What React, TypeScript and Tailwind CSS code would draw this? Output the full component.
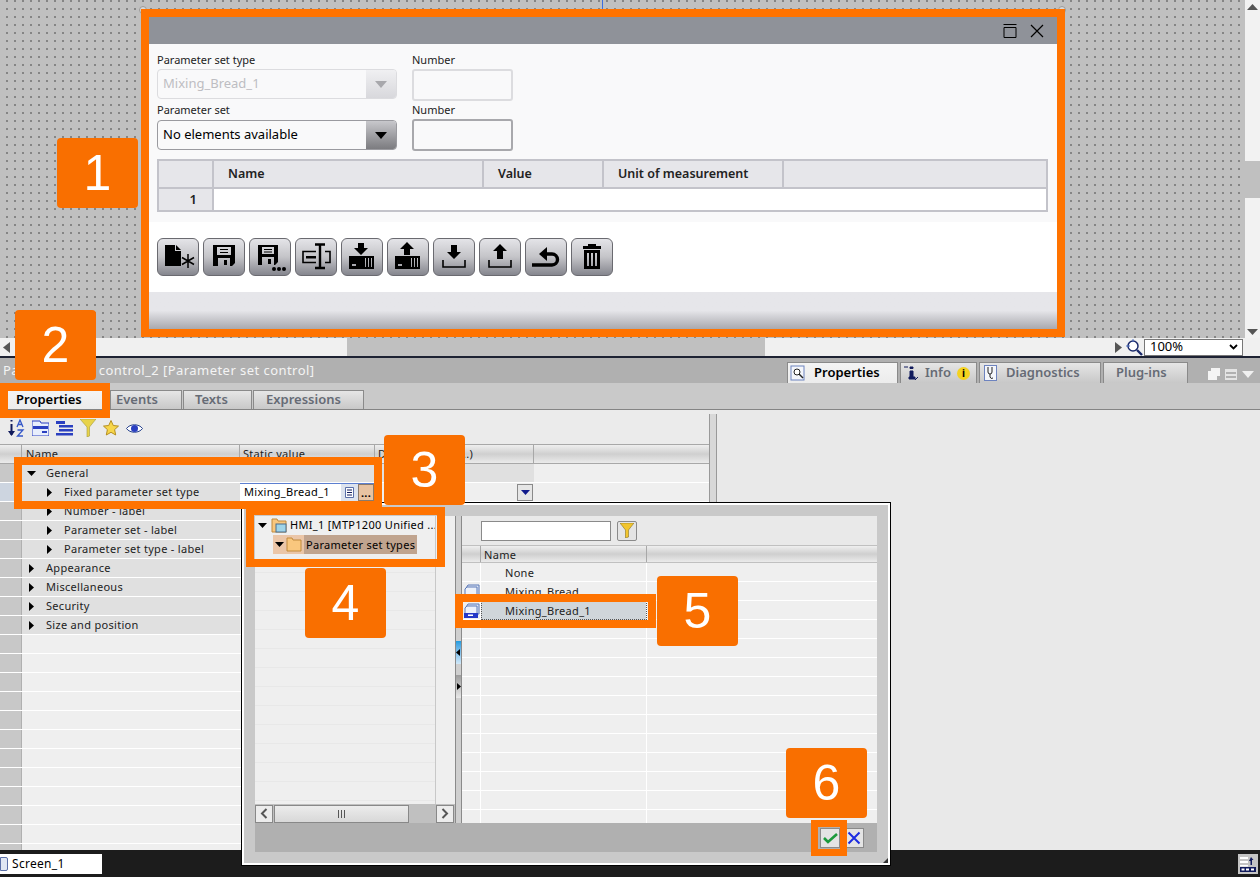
import type { ReactNode } from 'react'

const propRows = [
  { label: 'General', level: 0, open: true },
  { label: 'Fixed parameter set type', level: 1, selected: true },
  { label: 'Number - label', level: 1 },
  { label: 'Parameter set - label', level: 1 },
  { label: 'Parameter set type - label', level: 1 },
  { label: 'Appearance', level: 0 },
  { label: 'Miscellaneous', level: 0 },
  { label: 'Security', level: 0 },
  { label: 'Size and position', level: 0 },
]

// drawn in button pixels, 42x38
const toolIcons: ReactNode[] = [
  <>
    <path d="M8 7h10v6h6v15H8z" fill="#000" />
    <path d="M19 7l5 5h-5z" fill="#000" />
    <path d="M31 16v14M25 19.500l12 7M37 19.500l-12 7" stroke="#000" strokeWidth="1.5" />
  </>,
  <path fillRule="evenodd" d="M10 7h22v18l-3 3H10zM14 9v8h14V9zM17 11h8v1h-8zM17 14h8v1h-8zM15 20v8h12v-8zM21 22h3v5h-3z" fill="#000" />,
  <>
    <path fillRule="evenodd" d="M9 7h20v17l-3 3H9zM13 9v7h12V9zM15 11h8v1h-8zM15 13.500h8v1h-8zM13 19v8h12v-8zM19 21h3v5h-3z" fill="#000" />
    <circle cx="25" cy="31" r="2" fill="#000" />
    <circle cx="30" cy="31" r="2" fill="#000" />
    <circle cx="35" cy="31" r="2" fill="#000" />
  </>,
  <>
    <path d="M21 13.500H8v11h13M30 13.500h5v11h-5" fill="none" stroke="#000" strokeWidth="1.6" />
    <path d="M11 18h10v2.500H11z" fill="#000" />
    <path d="M20 6.500h10M20 30h10M25 6.500V30" fill="none" stroke="#000" strokeWidth="2.4" />
  </>,
  <>
    <path d="M17 5h6v5h4l-7 7-7-7h4z" fill="#000" />
    <path fillRule="evenodd" d="M8 18h25v13H8zM11 26v2h4v-2zM24 20v9h1v-9zM27 20v9h1v-9zM30 20v9h1v-9z" fill="#000" />
  </>,
  <>
    <path d="M20 4l7 7h-4v6h-6v-6h-4z" fill="#000" />
    <path fillRule="evenodd" d="M8 18h25v13H8zM11 26v2h4v-2zM24 20v9h1v-9zM27 20v9h1v-9zM30 20v9h1v-9z" fill="#000" />
  </>,
  <>
    <path d="M18 7h6v7h4l-7 7-7-7h4z" fill="#000" />
    <path d="M10 22v7h22v-7" fill="none" stroke="#000" strokeWidth="1.6" />
  </>,
  <>
    <path d="M21 6l7 7h-4v8h-6v-8h-4z" fill="#000" />
    <path d="M10 22v7h22v-7" fill="none" stroke="#000" strokeWidth="1.6" />
  </>,
  <>
    <path d="M7 27h20a5.500 5.500 0 0 0 0-11H19" fill="none" stroke="#000" strokeWidth="3.400" />
    <path d="M14 16l8-7v14z" fill="#000" />
  </>,
  <>
    <path d="M17 8V6h8v2h5v3H12V8z" fill="#000" />
    <path fillRule="evenodd" d="M13 12h16v19H13zM16 15v13h2V15zM20 15v13h2V15zM24 15v13h2V15z" fill="#000" />
  </>,
]

function Callout({ n, className }: { n: number; className: string }) {
  return (
    <div
      className={`absolute z-30 flex h-[70px] w-[81px] items-center justify-center rounded-[4px] bg-[#f96f00] font-['Liberation_Sans',sans-serif] text-[50px] leading-none text-white ${className}`}
    >
      {n}
    </div>
  )
}

function Frame({ className }: { className: string }) {
  return <div className={`pointer-events-none absolute z-20 border-[#ff7300] ${className}`} />
}

function Caret({ open, className = '' }: { open?: boolean; className?: string }) {
  return (
    <svg width="9" height="9" viewBox="0 0 9 9" className={`shrink-0 ${className}`}>
      <path d={open ? 'M0 2h9L4.5 7z' : 'M2 0l5 4.5L2 9z'} fill="#000" />
    </svg>
  )
}

function Handle({ className }: { className: string }) {
  return <div className={`absolute h-2 w-2 rounded-full border border-[#999] bg-[#d8d8d8] ${className}`} />
}

function Combo({ text, disabled }: { text: string; disabled?: boolean }) {
  return (
    <div
      className={`flex h-[30px] w-[240px] overflow-hidden rounded-[4px] border bg-[#f9f9fa] ${
        disabled ? 'border-[#dcdcdf]' : 'border-[#9a9a9f]'
      }`}
    >
      <div className={`flex-1 pl-[5px] text-[13px] leading-[27px] ${disabled ? 'text-[#bdbdc2]' : 'text-black'}`}>{text}</div>
      <div
        className={`flex w-[30px] items-center justify-center bg-gradient-to-b ${
          disabled ? 'from-[#f0f0f2] to-[#d8d8dc]' : 'from-[#c8c8cc] to-[#7c7c80]'
        }`}
      >
        <svg width="12" height="7" viewBox="0 0 12 7">
          <path d="M0 0h12L6 7z" fill={disabled ? '#a8a8ac' : '#000'} />
        </svg>
      </div>
    </div>
  )
}

function FolderIcon({ screen }: { screen?: boolean }) {
  return (
    <svg width="16" height="15" viewBox="0 0 16 15" className="shrink-0">
      <path d="M1 3V1h5l1 2h8v11H1z" fill="#f9c77e" stroke="#c08a3c" />
      {screen && <rect x="5" y="6" width="10" height="8" fill="#9fd4e8" stroke="#4a6d8c" />}
    </svg>
  )
}

function DbIcon() {
  return (
    <svg width="17" height="16" viewBox="0 0 17 16">
      <path d="M3 4l2-3h11v10H3z" fill="#dfe6f3" stroke="#5a78b8" />
      <path d="M2 5l2-2h10v9H2z" fill="#eef2fa" stroke="#5a78b8" />
      <path d="M1 10h14v5H1z" fill="#2438c8" />
      <path d="M5 11.5h5v1.5H5z" fill="#fff" />
    </svg>
  )
}

function ScrollBtn({ left }: { left?: boolean }) {
  return (
    <div className="flex h-[18px] w-[18px] shrink-0 items-center justify-center border border-[#888] bg-[#ececec]">
      <svg width="8" height="11" viewBox="0 0 8 11">
        <path d={left ? 'M6.5 1L2 5.5 6.5 10' : 'M1.5 1L6 5.5 1.5 10'} fill="none" stroke="#555" strokeWidth="2" />
      </svg>
    </div>
  )
}

function HeaderCell({ className = '', children }: { className?: string; children?: ReactNode }) {
  return (
    <div className={`h-full overflow-hidden whitespace-nowrap border-r border-[#a8a8a8] bg-gradient-to-b from-[#efefef] via-[#cfcfcf] to-[#ebebeb] pl-[3px] text-[11px] leading-[17px] text-[#222] ${className}`}>
      {children}
    </div>
  )
}

function Tab({ children, active, className }: { children: ReactNode; active?: boolean; className: string }) {
  return (
    <div
      className={`flex items-center border border-b-0 border-[#8a8a8a] bg-gradient-to-b text-[13px] font-semibold ${
        active ? 'from-[#f4f4f4] to-[#ececec] text-black' : 'from-[#e6e6e6] to-[#c8c8c8] text-[#666b75]'
      } ${className}`}
    >
      {children}
    </div>
  )
}

export default function App() {
  return (
    <div className="relative flex h-[877px] w-[1260px] flex-col overflow-hidden bg-[#ebebeb] font-['Noto_Sans',sans-serif] text-[11px] tracking-[0.3px] text-[#222]">
      {/* editor canvas */}
      <div className="flex h-[338px] shrink-0">
        <div className="relative flex-1 bg-[#c0c0c0] bg-[radial-gradient(circle_at_7px_1px,#858585_1.2px,transparent_1.5px)] bg-[length:8px_8px]">
          <div className="absolute left-[602px] top-0 h-[9px] w-px bg-[#3b6fe0]" />
          <Handle className="left-[139px] top-[6px]" />
          <Handle className="left-[1058px] top-[6px]" />
          <Handle className="left-[141px] top-[168px]" />
          <Handle className="left-[1056px] top-[168px]" />
          <Handle className="left-[598px] top-[325px]" />

          <div className="absolute left-[141px] top-[9px] flex h-[328px] w-[924px] flex-col border-[8px] border-[#ff7300] bg-white">
            <div className="flex h-[27px] shrink-0 items-center justify-end gap-[13px] bg-[#8f9299] pr-[13px]">
              <svg width="14" height="14" viewBox="0 0 14 14">
                <path d="M.5.500h13M1 3.500h12v10H1z" fill="none" stroke="#000" />
              </svg>
              <svg width="14" height="14" viewBox="0 0 14 14">
                <path d="M1 1l12 12M13 1L1 13" fill="none" stroke="#000" strokeWidth="1.2" />
              </svg>
            </div>
            <div className="h-[178px] shrink-0 bg-[#f9f9fa] px-[8px] pt-[8px] tracking-normal">
              <div className="flex gap-[15px]">
                <div className="w-[240px]">
                  <div className="h-[17px] text-[11px] leading-[15px] text-[#222]">Parameter set type</div>
                  <Combo text="Mixing_Bread_1" disabled />
                </div>
                <div>
                  <div className="h-[17px] text-[11px] leading-[15px] text-[#222]">Number</div>
                  <div className="h-[32px] w-[101px] rounded-[3px] border-2 border-[#dcdcdf]" />
                </div>
              </div>
              <div className="flex gap-[15px]">
                <div className="w-[240px]">
                  <div className="h-[19px] text-[11px] leading-[18px] text-[#222]">Parameter set</div>
                  <Combo text="No elements available" />
                </div>
                <div>
                  <div className="h-[18px] text-[11px] leading-[18px] text-[#222]">Number</div>
                  <div className="h-[32px] w-[101px] rounded-[3px] border-2 border-[#a8a8ac]" />
                </div>
              </div>
              <div className="mt-[8px] w-[891px] border-2 border-[#c3c3ca] bg-[#e6e6ea]">
                <div className="flex h-[26px] text-[12.5px] font-semibold leading-[25px]">
                  <div className="w-[55px] border-r-2 border-[#c3c3ca]" />
                  <div className="w-[270px] border-r-2 border-[#c3c3ca] pl-[14px]">Name</div>
                  <div className="w-[120px] border-r-2 border-[#c3c3ca] pl-[14px]">Value</div>
                  <div className="w-[180px] border-r-2 border-[#c3c3ca] pl-[14px]">Unit of measurement</div>
                </div>
                <div className="flex h-[23px] border-t-2 border-[#c3c3ca] bg-white">
                  <div className="w-[55px] border-r-2 border-[#c3c3ca] bg-[#e6e6ea] pr-[15px] text-right text-[13px] font-semibold leading-[21px]">1</div>
                </div>
              </div>
            </div>
            <div className="flex h-[70px] shrink-0 items-start gap-[4px] px-[8px] pt-[16px]">
              {toolIcons.map((icon, i) => (
                <div key={i} className="h-[38px] w-[42px] shrink-0 rounded-[6px] border border-[#6a6a70] bg-gradient-to-b from-[#e4e4e8] via-[#c4c4c8] to-[#85868e]">
                  <svg width="40" height="36" viewBox="1 1 40 36">
                    {icon}
                  </svg>
                </div>
              ))}
            </div>
            <div className="flex-1 bg-gradient-to-b from-[#e6e6ea] via-[#e6e6ea] to-[#a9a9ae]" />
          </div>
        </div>
        <div className="relative w-[15px] bg-[#f2f2f2]">
          <svg width="11" height="6" viewBox="0 0 11 6" className="absolute left-[2px] top-[4px]">
            <path d="M0 6l5.5-6L11 6z" fill="#555" />
          </svg>
          <div className="absolute left-0 top-[161px] h-[37px] w-full bg-[#c0c0c0]" />
          <svg width="11" height="6" viewBox="0 0 11 6" className="absolute bottom-[3px] left-[2px]">
            <path d="M0 0l5.5 6L11 0z" fill="#555" />
          </svg>
        </div>
      </div>

      {/* canvas horizontal scroll + zoom */}
      <div className="flex h-[18px] shrink-0 items-center bg-[#f0f0f0]">
        <svg width="7" height="11" viewBox="0 0 7 11" className="ml-[3px]">
          <path d="M7 0v11L0 5.5z" fill="#555" />
        </svg>
        <div className="ml-[337px] h-full w-[418px] bg-[#c0c0c0]" />
        <svg width="7" height="11" viewBox="0 0 7 11" className="ml-[350px]">
          <path d="M0 0v11l7-5.5z" fill="#555" />
        </svg>
        <svg width="18" height="17" viewBox="0 0 18 17" className="ml-[3px]">
          <circle cx="8" cy="7" r="5" fill="#fff" stroke="#1b2a6b" strokeWidth="1.5" />
          <path d="M12 11l5 5" stroke="#1b2a6b" strokeWidth="2.4" />
          <path d="M1 7h4M8 0v3" stroke="#4a6ec0" />
        </svg>
        <div className="ml-[1px] flex h-[17px] w-[99px] items-center justify-between border border-[#777] bg-white pl-[5px] pr-[4px] text-[13px] tracking-normal text-black">
          100%
          <svg width="9" height="6" viewBox="0 0 9 6">
            <path d="M1 1l3.5 3.5L8 1" fill="none" stroke="#000" strokeWidth="1.8" />
          </svg>
        </div>
      </div>
      <div className="h-[2px] shrink-0 bg-[#1d2233]" />

      {/* inspector title bar */}
      <div className="flex h-[25px] shrink-0 items-end justify-between bg-[#b0b0b0] pl-[3px]">
        <div className="self-center whitespace-nowrap text-[13px] tracking-[0.45px] text-[#f4f4f4]">Parameter set control_2 [Parameter set control]</div>
        <div className="flex items-end tracking-normal">
          <div className="flex gap-[2px]">
            <Tab active className="h-[21px] w-[111px] gap-[8px] pl-[2px]">
              <svg width="16" height="16" viewBox="0 0 16 16">
                <rect x="1" y="1" width="13" height="14" fill="#f4f6fb" stroke="#6d83bf" />
                <circle cx="7" cy="7" r="3" fill="#fff" stroke="#222" />
                <path d="M9 9l4 4" stroke="#222" strokeWidth="1.5" />
              </svg>
              Properties
            </Tab>
            <Tab className="h-[21px] w-[77px] gap-[6px] pl-[2px]">
              <svg width="16" height="16" viewBox="0 0 16 16">
                <path d="M7 2h3v1.500H7zM7 6h3v6h2v2H6v-2h1zM1 2l4 0M12 15l3-3" stroke="#111b5c" strokeWidth="1" fill="#111b5c" />
              </svg>
              Info
              <span className="flex h-[13px] w-[13px] items-center justify-center rounded-full bg-[#f4d21f] text-[10px] font-bold leading-none text-black">i</span>
            </Tab>
            <Tab className="h-[21px] w-[122px] gap-[9px] pl-[4px]">
              <svg width="13" height="16" viewBox="0 0 13 16">
                <rect x=".5" y=".5" width="12" height="15" fill="#f4f6fb" stroke="#6d83bf" />
                <path d="M4 2v5a2 2 0 0 0 4 0V2M6 9v3a2 2 0 0 0 3 1" fill="none" stroke="#222" />
              </svg>
              Diagnostics
            </Tab>
            <Tab className="h-[21px] w-[85px] pl-[12px]">Plug-ins</Tab>
          </div>
          <div className="mb-[3px] ml-[20px] flex items-center gap-[5px] pr-[6px]">
            <svg width="12" height="12" viewBox="0 0 12 12">
              <path d="M3 0h9v8H9V3H3zM0 3h9v9H0z" fill="#f4f4f4" />
            </svg>
            <svg width="12" height="11" viewBox="0 0 12 11">
              <path d="M0 0h12v11H0zM1 3v2h10V3zM1 7v2h10V7z" fill="#e4e4e4" fillRule="evenodd" />
            </svg>
            <svg width="12" height="7" viewBox="0 0 12 7">
              <path d="M0 0h12L6 7z" fill="#f0f0f0" />
            </svg>
          </div>
        </div>
      </div>

      {/* inspector tabs */}
      <div className="flex h-[27px] shrink-0 items-end gap-[1px] border-b border-[#848484] bg-[#c9c9c9] pl-[8px] tracking-normal">
        <Tab active className="h-[19px] w-[94px] justify-start border-0 pl-[8px]">Properties</Tab>
        <Tab className="ml-[7px] h-[19px] w-[72px] pl-[5px]">Events</Tab>
        <Tab className="h-[19px] w-[69px] pl-[11px]">Texts</Tab>
        <Tab className="h-[19px] w-[111px] pl-[12px]">Expressions</Tab>
      </div>

      {/* property grid */}
      <div className="flex min-h-0 flex-1">
        <div className="flex w-[709px] shrink-0 flex-col">
          <div className="flex h-[34px] shrink-0 items-center gap-[7px] pl-[8px] pt-[2px]">
            <svg width="17" height="18" viewBox="0 0 17 18">
              <path d="M3.500 1v1.500M3.500 5v11" stroke="#111b5c" strokeWidth="2" />
              <path d="M0 12l3.500 5L7 12z" fill="#111b5c" />
              <path d="M9 8l3-7 3 7M10 5.500h4M9.500 11H15l-5.500 6H15" fill="none" stroke="#3457c8" strokeWidth="1.3" />
            </svg>
            <svg width="17" height="16" viewBox="0 0 17 16">
              <path d="M0 1h8l1 2h8v13H0z" fill="#e8eefc" stroke="#2a3fc0" />
              <path d="M1 6h15v3H1z" fill="#2a3fc0" />
              <path d="M10 11h5v2h-5z" fill="#2a3fc0" />
            </svg>
            <svg width="17" height="16" viewBox="0 0 17 16">
              <path d="M0 1h9v3H0zM3 5h14v2.500H3zM3 9h14v2.500H3zM0 13h17v2.500H0z" fill="#2a3fc0" />
            </svg>
            <svg width="16" height="18" viewBox="0 0 16 18">
              <path d="M0 0h16L9.500 8v9L7 18V8z" fill="#e8d34a" stroke="#a59a3a" strokeWidth=".6" />
            </svg>
            <svg width="16" height="16" viewBox="0 0 16 16">
              <path d="M8 .5l2.300 5 5.200.6-3.900 3.500 1.100 5.400L8 12.300 3.300 15l1.100-5.400L.5 6.100l5.200-.6z" fill="#f7d64a" stroke="#b58f20" />
            </svg>
            <svg width="17" height="11" viewBox="0 0 17 11">
              <path d="M.5 5.500C4 .5 13 .5 16.500 5.500 13 10.500 4 10.500.5 5.500z" fill="#fff" stroke="#24408c" />
              <circle cx="8.500" cy="5.500" r="3.500" fill="#2a3fc0" />
            </svg>
          </div>
          <div className="grid h-[20px] shrink-0 grid-cols-[22px_218px_135px_159px_175px] border-y border-[#a8a8a8]">
            <HeaderCell />
            <HeaderCell className="pl-[4px] tracking-[0.3px]">Name</HeaderCell>
            <HeaderCell className="tracking-[0.3px]">Static value</HeaderCell>
            <HeaderCell>Dynamization (...)</HeaderCell>
            <HeaderCell className="border-r-0" />
          </div>
          <div className="min-h-0 flex-1 overflow-hidden">
            {propRows.map((row) => (
              <div key={row.label} className="grid h-[19px] grid-cols-[22px_218px_135px_159px_175px] border-b border-white">
                <div className={`border-r border-[#b0b0b0] ${row.selected ? 'bg-[#cdd5e0]' : 'bg-[#c8c8c8]'}`} />
                <div className={`flex items-center bg-[#e0e0e0] ${row.level ? 'pl-[23px]' : 'pl-[5px]'}`}>
                  <Caret open={row.open} />
                  <span className="ml-[10px] whitespace-nowrap">{row.label}</span>
                </div>
                {row.selected ? (
                  <div className="flex items-center border-t border-[#5d7fd0] bg-white pl-[4px] text-black">
                    <span className="w-[97px] whitespace-nowrap">Mixing_Bread_1</span>
                    <div className="flex h-full w-[17px] items-center justify-center bg-[#dde3ee]">
                      <svg width="9" height="11" viewBox="0 0 9 11">
                        <path d="M.5.5h8v10h-8z" fill="#fff" stroke="#5a6fa8" />
                        <path d="M2 3h5M2 5.500h5M2 8h5" stroke="#111b5c" />
                      </svg>
                    </div>
                    <div className="flex h-full w-[16px] items-end justify-center border border-[#8a7a6c] bg-[#e8c3a2] text-[11px] font-bold leading-[14px]">...</div>
                  </div>
                ) : (
                  <div className={row.open ? 'bg-[#e0e0e0]' : 'bg-[#efefef]'} />
                )}
                <div className={`flex items-center justify-end pr-[1px] ${row.open ? 'bg-[#e0e0e0]' : 'bg-[#efefef]'}`}>
                  {row.selected && (
                    <div className="flex h-[17px] w-[16px] items-center justify-center border border-[#8a8a8a] bg-[#e6e6e6]">
                      <svg width="9" height="5" viewBox="0 0 9 5">
                        <path d="M0 0h9L4.500 5z" fill="#111b8c" />
                      </svg>
                    </div>
                  )}
                </div>
                <div className="bg-[#efefef]" />
              </div>
            ))}
            {Array.from({ length: 13 }).map((_, i) => (
              <div key={i} className="grid h-[19px] grid-cols-[22px_687px] border-b border-white">
                <div className="border-r border-[#b0b0b0] bg-[#c8c8c8]" />
                <div className="bg-[#efefef]" />
              </div>
            ))}
          </div>
        </div>
        <div className="mt-[4px] w-[8px] shrink-0 border-x border-[#999] bg-[#d8d8d8]" />
        <div className="flex-1 bg-[#e9e9e9]" />
      </div>

      {/* status bar */}
      <div className="flex h-[27px] shrink-0 items-center justify-between bg-[#1c1c1c] pr-[2px]">
        <div className="flex h-[20px] w-[102px] items-center gap-[4px] bg-white text-[12px] text-black">
          <div className="h-[14px] w-[8px] rounded-r-[2px] border border-[#5a6fa8] bg-[#dfe6f3]" />
          Screen_1
        </div>
        <div className="flex h-[20px] w-[20px] items-center justify-center bg-[#c4c4c4]">
          <svg width="16" height="16" viewBox="0 0 16 16">
            <path d="M0 1h8v2H0zM0 5h8v2H0zM0 9h8v1.500H0z" fill="#fff" />
            <path d="M0 11h16v5H0z" fill="#111b5c" />
            <path d="M1.500 12.500h3v2h-3zM6 12.500h3v2H6zM11 12.500h3v2h-3z" fill="#fff" />
            <path d="M11 1l2.500 3H12v5h-1.500V5H9z" fill="#111b5c" />
          </svg>
        </div>
      </div>

      {/* object list dialog */}
      <div className="absolute left-[241px] top-[502px] z-10 flex h-[364px] w-[650px] flex-col border border-black bg-[#c9c9c9] p-[13px] shadow-[inset_0_0_0_2px_#fff]">
        <div className="flex min-h-0 flex-1">
          <div className="flex w-[200px] shrink-0 flex-col bg-[#efefef]">
            <div className="mr-[19px] min-h-0 flex-1 overflow-hidden border-r border-[#c8c8c8]">
              <div className="flex h-[19px] items-center pl-[3px]">
                <Caret open />
                <span className="ml-[4px]"><FolderIcon screen /></span>
                <span className="ml-[3px] whitespace-nowrap text-black">HMI_1 [MTP1200 Unified ...</span>
              </div>
              <div className="ml-[18px] flex h-[19px] w-[144px] items-center bg-[#ebc6a8] pl-[2px]">
                <Caret open />
                <span className="ml-[2px]"><FolderIcon /></span>
                <span className="ml-[2px] h-full flex-1 whitespace-nowrap bg-[#c0a48f] pl-[2px] leading-[19px] text-black">Parameter set types</span>
              </div>
              {Array.from({ length: 14 }).map((_, i) => (
                <div key={i} className="h-[19px] border-b border-[#e8e8e8]" />
              ))}
            </div>
            <div className="flex h-[19px] shrink-0 items-center bg-[#c0c0c0]">
              <ScrollBtn left />
              <div className="ml-[1px] flex h-[18px] w-[135px] items-center justify-center border border-[#888] bg-gradient-to-b from-[#ececec] to-[#d8d8d8]">
                <div className="h-[8px] w-[7px] border-x border-[#555] bg-[linear-gradient(90deg,transparent_2px,#555_2px,#555_3px,transparent_3px)]" />
              </div>
              <div className="ml-[27px]">
                <ScrollBtn />
              </div>
            </div>
          </div>
          <div className="relative w-[7px] shrink-0 border-x border-[#8a8a8a] bg-[#cfcfcf]">
            <div className="absolute left-0 top-[125px] flex h-[23px] w-full items-center bg-gradient-to-b from-[#1c9ce0] to-[#d0e8f8]">
              <svg width="5" height="7" viewBox="0 0 5 7"><path d="M4 0v7L0 3.500z" fill="#000" /></svg>
            </div>
            <div className="absolute left-0 top-[159px] flex h-[23px] w-full items-center bg-gradient-to-b from-[#9c9c9c] to-[#e8e8e8]">
              <svg width="5" height="7" viewBox="0 0 5 7"><path d="M1 0v7l4-3.500z" fill="#000" /></svg>
            </div>
          </div>
          <div className="flex min-w-0 flex-1 flex-col bg-[#e9e9e9]">
            <div className="flex h-[29px] shrink-0 items-center gap-[6px] pl-[19px]">
              <div className="h-[20px] w-[130px] border border-[#8a8a8a] bg-white" />
              <div className="flex h-[20px] w-[20px] items-center justify-center rounded-[2px] border border-[#8a8a8a] bg-[#e4e4e4]">
                <svg width="14" height="15" viewBox="0 0 14 15">
                  <path d="M0 0h14L8.500 7v7L5.500 15V7z" fill="#f2c52e" stroke="#8a7320" strokeWidth=".6" />
                </svg>
              </div>
            </div>
            <div className="grid h-[18px] shrink-0 grid-cols-[19px_166px_1fr] border-y border-[#c0c0c0]">
              <HeaderCell />
              <HeaderCell className="tracking-[0.3px]">Name</HeaderCell>
              <HeaderCell className="border-r-0" />
            </div>
            <div className="min-h-0 flex-1 overflow-hidden bg-[#efefef]">
              {['None', 'Mixing_Bread', 'Mixing_Bread_1', ...Array(11).fill('')].map((name: string, i) => (
                <div key={i} className="grid h-[19px] grid-cols-[19px_166px_1fr] border-b border-white">
                  <div className="flex items-center border-r border-white pl-[1px]">{i === 1 || i === 2 ? <DbIcon /> : null}</div>
                  <div
                    className={`whitespace-nowrap border-r border-white pl-[24px] leading-[19px] text-[#222] ${
                      i === 2 ? 'outline-1 -outline-offset-1 outline-dotted outline-[#555] bg-[#d0d6da]' : ''
                    }`}
                  >
                    {name}
                  </div>
                  <div />
                </div>
              ))}
            </div>
          </div>
        </div>
        <div className="flex h-[29px] shrink-0 items-center justify-end gap-[4px] bg-[#b0b0b0] pr-[13px]">
          <div className="flex h-[20px] w-[20px] items-center justify-center border border-[#8a8a8a] bg-[#e4e4e4]">
            <svg width="15" height="12" viewBox="0 0 15 12">
              <path d="M1 6l4 4 9-8" fill="none" stroke="#1c9a3c" strokeWidth="2.6" />
            </svg>
          </div>
          <div className="flex h-[20px] w-[20px] items-center justify-center border border-[#8a8a8a] bg-[#e4e4e4]">
            <svg width="14" height="14" viewBox="0 0 14 14">
              <path d="M1.500 1.500l11 11M12.500 1.500l-11 11" fill="none" stroke="#1c2ce0" strokeWidth="2" />
            </svg>
          </div>
        </div>
        <svg width="5" height="5" viewBox="0 0 5 5" className="absolute bottom-[2px] right-[2px]">
          <path d="M5 0v5H0z" fill="#333" />
        </svg>
      </div>

      {/* annotation frames and numbers */}
      <Frame className="left-0 top-[383px] h-[35px] w-[110px] border-[8px]" />
      <Frame className="left-[14px] top-[457px] h-[52px] w-[368px] border-[8px]" />
      <Frame className="left-[246px] top-[507px] h-[60px] w-[199px] border-[8px]" />
      <Frame className="left-[455px] top-[594px] h-[34px] w-[201px] border-[8px]" />
      <Frame className="left-[811px] top-[820px] h-[36px] w-[36px] border-[7px]" />
      <Callout n={1} className="left-[57px] top-[138px]" />
      <Callout n={2} className="left-[15px] top-[310px]" />
      <Callout n={3} className="left-[384px] top-[435px]" />
      <Callout n={4} className="left-[305px] top-[568px]" />
      <Callout n={5} className="left-[657px] top-[576px]" />
      <Callout n={6} className="left-[786px] top-[748px]" />
    </div>
  )
}
